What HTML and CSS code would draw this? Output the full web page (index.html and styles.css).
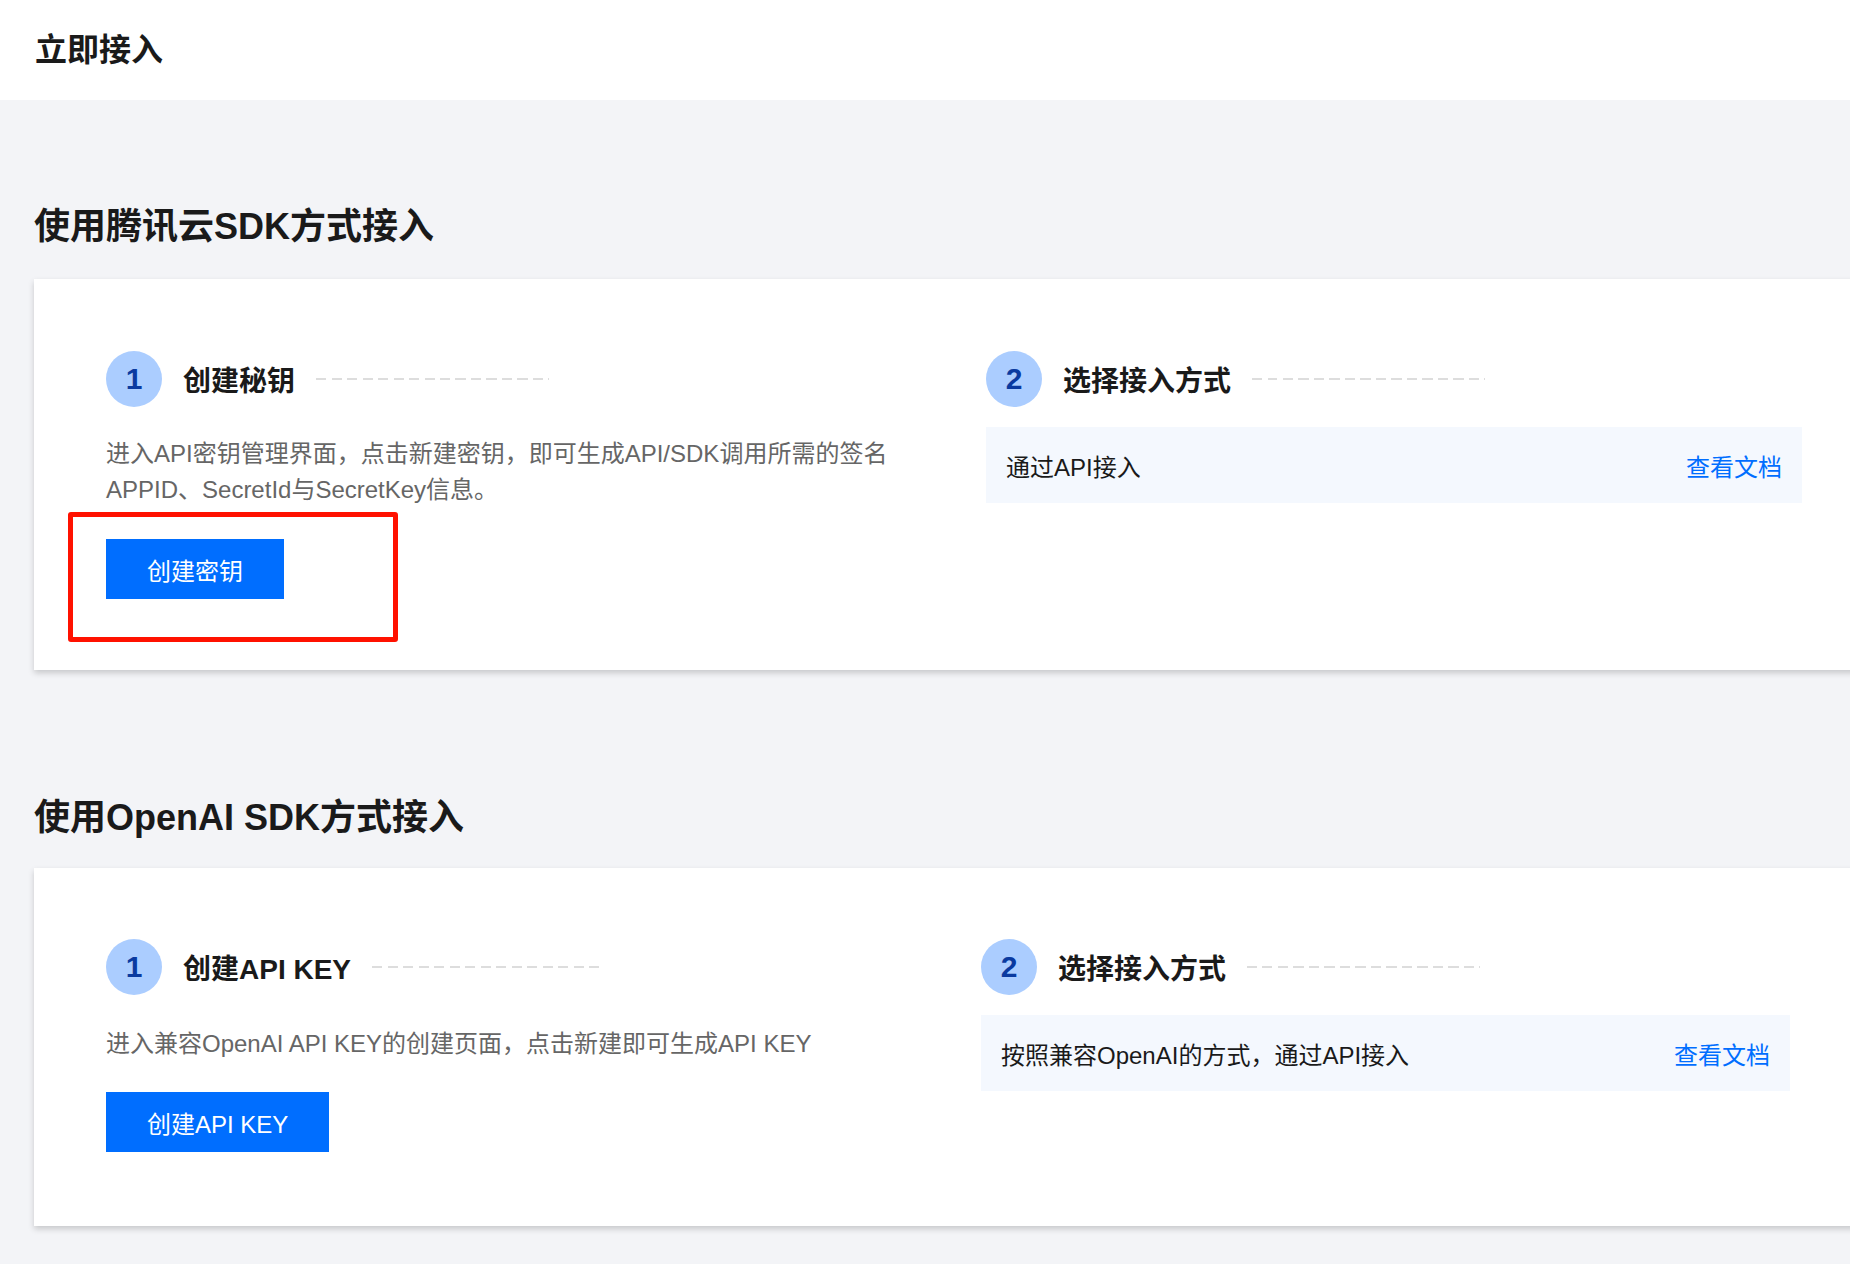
FILE: index.html
```html
<!DOCTYPE html>
<html lang="zh-CN">
<head>
<meta charset="utf-8">
<title>立即接入</title>
<link rel="stylesheet" href="styles.css">
</head>
<body>
<header class="page-header">立即接入</header>
<main class="page-main">
  <h2 class="section-title first">使用腾讯云SDK方式接入</h2>
  <section class="card">
    <div class="steps steps-a">
      <div class="step">
        <div class="step-head">
          <span class="step-num">1</span>
          <span class="step-title">创建秘钥</span>
          <span class="step-dash"></span>
        </div>
        <p class="step-desc">进入API密钥管理界面，点击新建密钥，即可生成API/SDK调用所需的签名APPID、SecretId与SecretKey信息。</p>
        <div class="btn-wrap">
          <button class="btn-primary">创建密钥</button>
          <span class="highlight-box"></span>
        </div>
      </div>
      <div class="step">
        <div class="step-head">
          <span class="step-num">2</span>
          <span class="step-title">选择接入方式</span>
          <span class="step-dash"></span>
        </div>
        <div class="info-row">
          <span class="info-text">通过API接入</span>
          <a class="info-link" href="#">查看文档</a>
        </div>
      </div>
    </div>
  </section>

  <h2 class="section-title">使用OpenAI SDK方式接入</h2>
  <section class="card card-b">
    <div class="steps steps-b">
      <div class="step">
        <div class="step-head">
          <span class="step-num">1</span>
          <span class="step-title">创建API KEY</span>
          <span class="step-dash"></span>
        </div>
        <p class="step-desc">进入兼容OpenAI API KEY的创建页面，点击新建即可生成API KEY</p>
        <div class="btn-wrap">
          <button class="btn-primary">创建API KEY</button>
        </div>
      </div>
      <div class="step">
        <div class="step-head">
          <span class="step-num">2</span>
          <span class="step-title">选择接入方式</span>
          <span class="step-dash"></span>
        </div>
        <div class="info-row">
          <span class="info-text">按照兼容OpenAI的方式，通过API接入</span>
          <a class="info-link" href="#">查看文档</a>
        </div>
      </div>
    </div>
  </section>
</main>
</body>
</html>
```

FILE: styles.css
```css
html, body {
  margin: 0;
  padding: 0;
  height: 100%;
}

body {
  font-family: "Liberation Sans", "Noto Sans CJK SC", Arial, sans-serif;
  background: #f3f4f7;
  color: #222;
  overflow: hidden;
}

.page-header {
  height: 100px;
  line-height: 100px;
  background: #fff;
  padding-left: 35px;
  font-size: 32px;
  font-weight: 700;
  color: #1a1a1a;
}

.page-main {
  padding: 0 0 40px 34px;
  width: 1840px;
}

.section-title {
  margin: 123px 0 25px;
  font-size: 36px;
  line-height: 50px;
  font-weight: 700;
  color: #1a1a1a;
}

.section-title.first {
  margin-top: 102px;
  margin-bottom: 27px;
}

.card {
  background: #fff;
  box-shadow: 0 3px 6px rgba(0, 0, 0, 0.18);
  padding: 72px 72px 71px;
}

.card-b {
  padding-top: 71px;
  padding-bottom: 74px;
}

.steps {
  display: grid;
  column-gap: 64px;
}

.steps-a {
  grid-template-columns: 816px 816px;
}

.steps-b {
  grid-template-columns: 811px 809px;
}

.step-head {
  display: flex;
  align-items: center;
  height: 56px;
}

.step-num {
  width: 56px;
  height: 56px;
  border-radius: 50%;
  background: #abcdff;
  color: #0a3aa0;
  font-size: 30px;
  font-weight: 700;
  display: flex;
  align-items: center;
  justify-content: center;
  flex: none;
}

.step-title {
  margin-left: 21px;
  font-size: 28px;
  font-weight: 700;
  color: #1a1a1a;
}

.step-dash {
  margin-left: 21px;
  width: 233px;
  height: 2px;
  background: repeating-linear-gradient(to right, #dddddd 0 10px, transparent 10px 15.5px);
}

.step-desc {
  margin: 29px 0 0;
  font-size: 24px;
  line-height: 36px;
  color: #666;
}

.steps-b .step-desc {
  margin-top: 31px;
}

.btn-wrap {
  position: relative;
  margin-top: 31px;
}

.steps-b .btn-wrap {
  margin-top: 30px;
}

.btn-primary {
  display: block;
  height: 60px;
  padding: 0 41px;
  border: 0;
  background: #006eff;
  color: #fff;
  font-family: inherit;
  font-size: 24px;
}

.highlight-box {
  position: absolute;
  left: -38px;
  top: -27px;
  width: 320px;
  height: 120px;
  border: 5px solid #ff1100;
  border-radius: 3px;
  pointer-events: none;
}

.info-row {
  margin-top: 20px;
  height: 76px;
  background: #f4f8fe;
  display: flex;
  align-items: center;
  justify-content: space-between;
  padding: 0 20px;
}

.info-text {
  font-size: 24px;
  color: #1a1a1a;
}

.info-link {
  font-size: 24px;
  color: #006eff;
  text-decoration: none;
}
```
